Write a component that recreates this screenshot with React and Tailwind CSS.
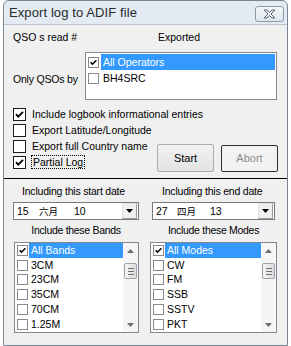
import React from "react";

const bands = ["All Bands", "3CM", "23CM", "35CM", "70CM", "1.25M"];
const modes = ["All Modes", "CW", "FM", "SSB", "SSTV", "PKT"];

function Check({ size = 13 }) {
  const s = size - 2;
  return (
    <svg width={s} height={s} viewBox="0 0 11 11">
      <path d="M2 5.2 L4.3 7.6 L9 2.8" fill="none" stroke="#000" strokeWidth="1.9" />
    </svg>
  );
}

function Box({ checked, small }) {
  if (small) {
    return (
      <div className="w-[11px] h-[11px] shrink-0 bg-white border border-[#8a8a8a] flex items-center justify-center">
        {checked && <Check size={11} />}
      </div>
    );
  }
  return (
    <div className="w-[13px] h-[13px] shrink-0 bg-white border border-[#1c1c1c] flex items-center justify-center">
      {checked && <Check size={13} />}
    </div>
  );
}

function ScrollBar() {
  return (
    <div className="w-[15px] shrink-0 h-full flex flex-col items-center bg-[#f5f5f5]">
      <div className="h-[15px] flex items-center justify-center">
        <svg width="7" height="4" viewBox="0 0 7 4">
          <path d="M0 4 L3.5 0 L7 4Z" fill="#6e6e6e" />
        </svg>
      </div>
      <div className="mt-[5px] w-[13px] h-[16px] rounded-[2px] border border-[#9aa2ac] bg-gradient-to-r from-[#f6f6f6] to-[#dcdcdc] flex flex-col items-center justify-center gap-[2px]">
        <div className="w-[6px] h-px bg-[#6f6f6f]" />
        <div className="w-[6px] h-px bg-[#6f6f6f]" />
        <div className="w-[6px] h-px bg-[#6f6f6f]" />
      </div>
      <div className="flex-1" />
      <div className="h-[15px] flex items-center justify-center">
        <svg width="7" height="4" viewBox="0 0 7 4">
          <path d="M0 0 L3.5 4 L7 0Z" fill="#6e6e6e" />
        </svg>
      </div>
    </div>
  );
}

function CheckList({ items }) {
  return (
    <div className="h-[91px] bg-white border border-[#828790] flex">
      <div className="flex-1 flex flex-col">
        {items.map((it, i) => (
          <div key={it} className="h-[14.8px] flex items-center pl-[2px]">
            <Box small checked={i === 0} />
            <div
              className={`ml-[1px] h-full flex-1 flex items-center pl-[2px] ${
                i === 0 ? "bg-[#3399ff] text-white" : ""
              }`}
            >
              {it}
            </div>
          </div>
        ))}
      </div>
      <ScrollBar />
    </div>
  );
}

function Combo({ parts, widths }) {
  return (
    <div className="h-[18px] bg-white border border-[#7a7a7a] flex items-center">
      <div className="flex-1 flex items-center pl-[3px]">
        <span className={widths[0]}>{parts[0]}</span>
        <span className={`${widths[1]} text-[9.5px]`}>{parts[1]}</span>
        <span>{parts[2]}</span>
      </div>
      <div className="w-[15px] h-[16px] mr-px bg-[#f0f0f0] border-t border-l border-[#e3e3e3] border-r border-b border-r-[#9a9a9a] border-b-[#9a9a9a] flex items-center justify-center">
        <svg width="7" height="4" viewBox="0 0 7 4">
          <path d="M0 0 L3.5 4 L7 0Z" fill="#000" />
        </svg>
      </div>
    </div>
  );
}

export default function App() {
  return (
    <div className="w-[291px] h-[346px] overflow-hidden bg-white font-['Liberation_Sans','Noto_Sans_CJK_SC',Arial,sans-serif] text-[10.5px] text-black leading-[13px]">
      <div className="ml-[3px] w-[285px] h-[346px] flex flex-col border border-[#7a8696] rounded-t-[6px] bg-gradient-to-b from-[#e4ebf3] to-[#d3dde8] overflow-hidden">
        {/* Title bar */}
        <div className="h-[23px] flex items-center justify-between pl-[5px] pr-[3px] shrink-0">
          <span className="text-[13px] text-[#2a2a2a] tracking-[0.1px]">Export log to ADIF file</span>
          <div className="w-[29px] h-[16px] mt-[3px] rounded-[3px] border border-[#8a9aad] bg-gradient-to-b from-[#f4f7fa] to-[#dfe6ee] flex items-center justify-center">
            <svg width="13" height="10" viewBox="0 0 13 10">
              <path
                d="M1 1 H4 L6.5 3.5 L9 1 H12 L8 5 L12 9 H9 L6.5 6.5 L4 9 H1 L5 5 Z"
                fill="#eef1f4"
                stroke="#5b6675"
                strokeWidth="1"
                strokeLinejoin="round"
              />
            </svg>
          </div>
        </div>

        {/* Client area */}
        <div className="flex-1 bg-[#f0f0f0] border-t border-[#b9c4d1] flex flex-col">
          <div className="pl-[9px]">
            <div className="h-[27px] pt-[6px] flex">
              <span className="w-[145px]">QSO s read #</span>
              <span>Exported</span>
            </div>
            <div className="flex">
              <span className="w-[72px] pt-[21px] tracking-[-0.2px]">Only QSOs by</span>
              <div className="w-[192px] h-[48px] bg-white border border-[#828790] flex flex-col pt-px">
                <div className="h-[16px] flex items-center pl-[2px]">
                  <Box small checked />
                  <div className="ml-[2px] mr-px h-full flex-1 flex items-center pl-[2px] bg-[#3399ff] text-white">
                    All Operators
                  </div>
                </div>
                <div className="h-[16px] flex items-center pl-[2px]">
                  <Box small />
                  <div className="ml-[2px] flex items-center pl-[2px]">BH4SRC</div>
                </div>
              </div>
            </div>

            {/* Options + buttons */}
            <div className="h-[78px] flex pt-[6px]">
              <div className="w-[144px] whitespace-nowrap flex flex-col">
                <div className="h-[16px] flex items-center gap-[6px]">
                  <Box checked />
                  <span>Include logbook informational entries</span>
                </div>
                <div className="h-[16px] flex items-center gap-[6px]">
                  <Box />
                  <span>Export Latitude/Longitude</span>
                </div>
                <div className="h-[16px] flex items-center gap-[6px]">
                  <Box />
                  <span>Export full Country name</span>
                </div>
                <div className="h-[16px] flex items-center gap-[5px]">
                  <Box checked />
                  <span className="border border-dotted border-black px-px leading-[12px]">Partial Log</span>
                </div>
              </div>
              <div className="self-end mb-[6px] flex items-end gap-[7px]">
                <button className="w-[57px] h-[28px] rounded-[2px] border border-[#acacac] bg-gradient-to-b from-[#f2f2f2] to-[#e3e3e3] text-[11px]">
                  Start
                </button>
                <button className="w-[57px] h-[27px] rounded-[2px] border border-[#2c2c2c] bg-[#f2f2f2] text-[11px] text-[#8d8d8d]">
                  Abort
                </button>
              </div>
            </div>
          </div>

          <div className="h-px bg-black" />

          {/* Dates and lists */}
          <div className="pl-[9px] flex gap-[11px]">
            <div className="w-[126px] flex flex-col">
              <div className="h-[23px] pt-[6px] pl-[9px] tracking-[-0.2px]">Including this start date</div>
              <Combo parts={["15", "六月", "10"]} widths={["w-[22px]", "w-[35px]"]} />
              <div className="h-[22px] pt-[4px] text-center tracking-[-0.3px]">Include these Bands</div>
              <div className="ml-px w-[125px]">
                <CheckList items={bands} />
              </div>
            </div>
            <div className="w-[127px] flex flex-col">
              <div className="h-[23px] pt-[6px] pl-[12px] tracking-[-0.2px]">Including this end date</div>
              <div className="ml-[2px] w-[123px]">
                <Combo parts={["27", "四月", "13"]} widths={["w-[21px]", "w-[33px]"]} />
              </div>
              <div className="h-[22px] pt-[4px] text-center tracking-[-0.3px]">Include these Modes</div>
              <CheckList items={modes} />
            </div>
          </div>
        </div>
      </div>
    </div>
  );
}
